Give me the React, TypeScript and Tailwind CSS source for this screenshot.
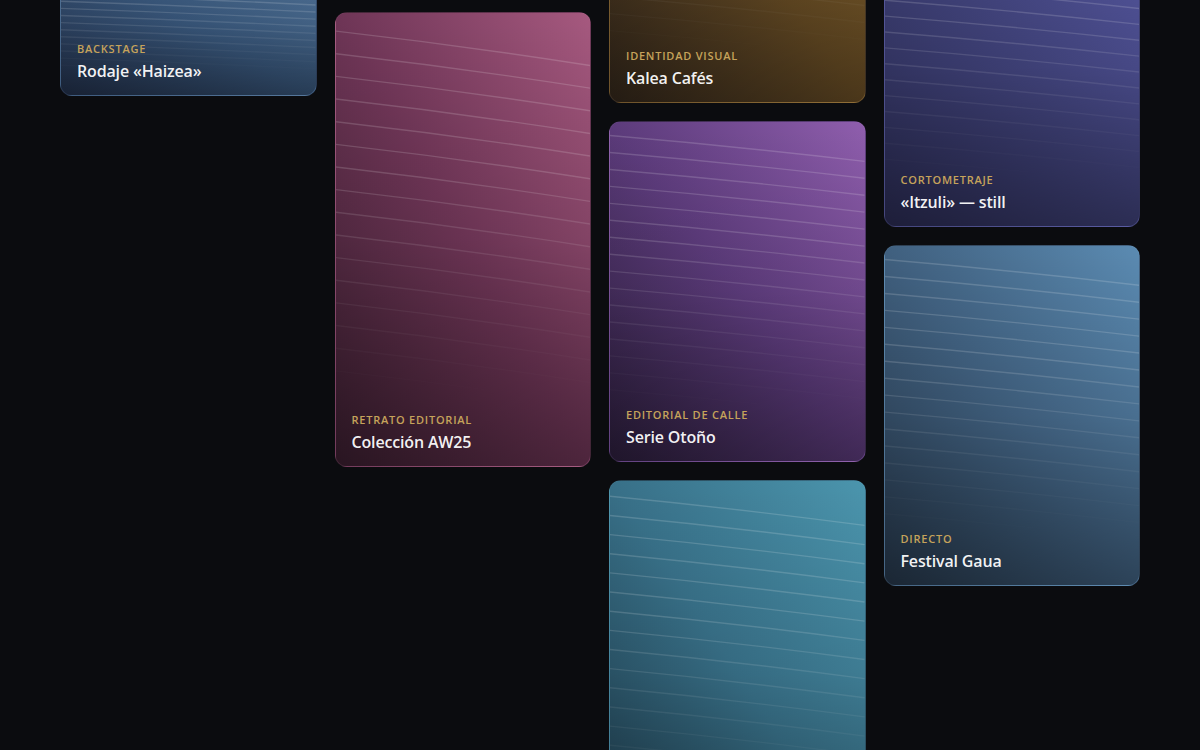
import React from 'react';

type Item = {
  label?: string;
  title?: string;
  height: string;
  bg: string;
};

// columns of the masonry gallery (page is scrolled, first cards sit above the fold)
const columns: Item[][] = [
  [
    { height: 'h-[334px]', bg: 'from-[#2a2238] via-[#4a3a64] to-[#6a5690]' },
    { height: 'h-[144px]', bg: 'from-[#22304a] via-[#38567a] to-[#52759a]', label: 'Backstage', title: 'Rodaje «Haizea»' },
  ],
  [
    { height: 'h-[394px]', bg: 'from-[#1e2a24] via-[#355546] to-[#4d7a66]' },
    { height: 'h-[455px]', bg: 'from-[#3a1e2f] via-[#6e3556] to-[#a6597f]', label: 'Retrato editorial', title: 'Colección AW25' },
  ],
  [
    { height: 'h-[143px]', bg: 'from-[#2a1e1e] via-[#553434] to-[#7a4a4a]' },
    { height: 'h-[342px]', bg: 'from-[#33271b] via-[#6a4e25] to-[#8e6b31]', label: 'Identidad visual', title: 'Kalea Cafés' },
    { height: 'h-[341px]', bg: 'from-[#2c1e3c] via-[#5c3b7b] to-[#8f5ead]', label: 'Editorial de calle', title: 'Serie Otoño' },
    { height: 'h-[385px]', bg: 'from-[#1f3c4c] via-[#387088] to-[#4b95ad]' },
  ],
  [
    { height: 'h-[289px]', bg: 'from-[#1f2a2a] via-[#34504e] to-[#4a7270]' },
    { height: 'h-[320px]', bg: 'from-[#2a2b52] via-[#3f4178] to-[#5658a2]', label: 'Cortometraje', title: '«Itzuli» — still' },
    { height: 'h-[341px]', bg: 'from-[#26374a] via-[#40607f] to-[#5b8bb2]', label: 'Directo', title: 'Festival Gaua' },
  ],
];

const lines = Array.from({ length: 20 }, (_, i) => 4 + i * 5);

const Card: React.FC<{ item: Item }> = ({ item }) => (
  <div className={`relative overflow-hidden rounded-xl border border-white/[0.03] bg-linear-to-tr ${item.bg} ${item.height}`}>
    {/* wave lines */}
    <svg
      className="absolute inset-0 h-full w-full [mask-image:linear-gradient(to_bottom,black_35%,transparent_85%)]"
      viewBox="0 0 100 100"
      preserveAspectRatio="none"
    >
      {lines.map((y) => (
        <path
          key={y}
          d={`M0 ${y} Q 50 ${y + 3.2} 100 ${y + 7.6}`}
          fill="none"
          stroke="white"
          strokeOpacity="0.16"
          strokeWidth="1.4"
          vectorEffect="non-scaling-stroke"
        />
      ))}
    </svg>
    <div className="absolute inset-0 bg-linear-to-t from-black/30 via-black/5 to-transparent" />
    {item.title && (
      <div className="absolute bottom-0 left-0 px-4 pb-[13px]">
        <div className="text-[11px] font-semibold uppercase tracking-[0.07em] text-[#c6a35b] leading-4">
          {item.label}
        </div>
        <div className="mt-[3px] text-[16px] font-semibold leading-[22px] tracking-[-0.01em] text-white/95">
          {item.title}
        </div>
      </div>
    )}
  </div>
);

export default function App() {
  return (
    <div className="h-[750px] overflow-hidden bg-[#0b0c0f] font-['Open_Sans',sans-serif]">
      <div className="mx-auto -mt-[400px] grid max-w-[1080px] grid-cols-4 gap-x-[18px]">
        {columns.map((col, ci) => (
          <div key={ci} className="flex flex-col gap-[18px]">
            {col.map((item, i) => (
              <Card key={i} item={item} />
            ))}
          </div>
        ))}
      </div>
    </div>
  );
}
